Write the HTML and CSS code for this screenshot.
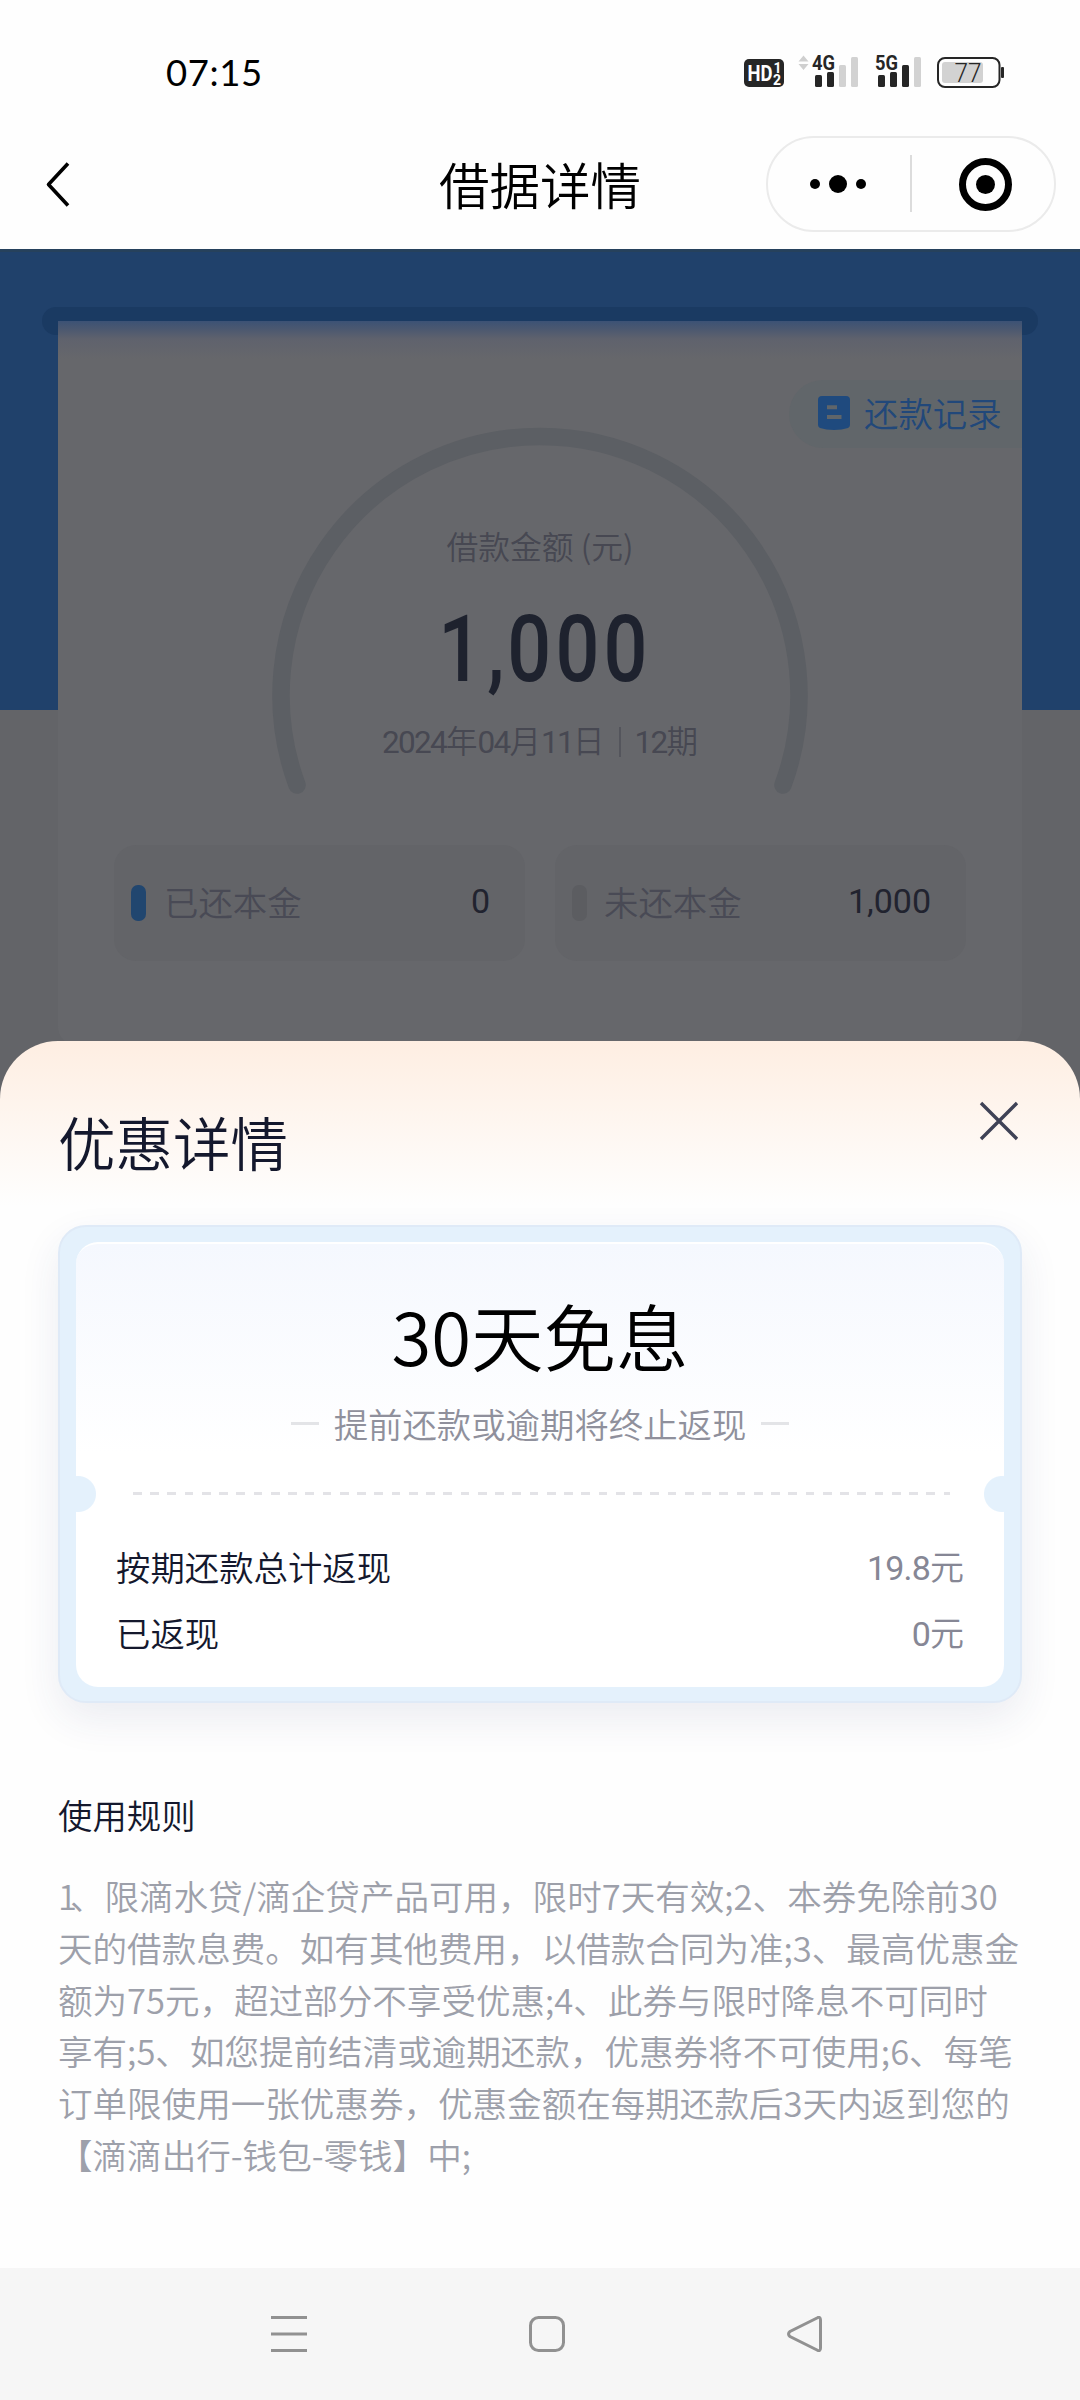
FILE: index.html
```html
<!DOCTYPE html>
<html lang="zh-CN">
<head>
<meta charset="utf-8">
<title>借据详情</title>
<link rel="stylesheet" href="styles.css">
</head>
<body>
<div class="phone">
  <header class="top">
    <div class="status">
      <span class="clock">07:15</span>
      <svg class="status-icons" width="264" height="40" viewBox="742 52 264 40">
        <rect x="744" y="59" width="40" height="28" rx="5" fill="#262626"/>
        <g font-family="Roboto, sans-serif" font-weight="700" fill="#fff">
          <text x="747.5" y="81" font-size="22" textLength="25" lengthAdjust="spacingAndGlyphs">HD</text>
          <text x="773.500" y="73" font-size="14">1</text>
          <text x="773" y="84.500" font-size="14">2</text>
        </g>
        <path d="M803.500 55.500l5 6h-10zM803.500 70l5-6h-10z" fill="#cfcfcf"/>
        <g font-family="Roboto, sans-serif" font-weight="700" font-size="21" fill="#262626">
          <text x="812" y="70" textLength="23" lengthAdjust="spacingAndGlyphs">4G</text>
          <text x="875" y="70" textLength="23" lengthAdjust="spacingAndGlyphs">5G</text>
        </g>
        <g fill="#262626">
          <rect x="815" y="75" width="7" height="12" rx="1.500"/>
          <rect x="827" y="72" width="7" height="15" rx="1.500"/>
          <rect x="878" y="75" width="7" height="12" rx="1.500"/>
          <rect x="890" y="72" width="7" height="15" rx="1.500"/>
          <rect x="902" y="65" width="7" height="22" rx="1.500"/>
        </g>
        <g fill="#d2d2d2">
          <rect x="839" y="65" width="7" height="22" rx="1.500"/>
          <rect x="851" y="57" width="7" height="30" rx="1.500"/>
          <rect x="914" y="57" width="7" height="30" rx="1.500"/>
          <rect x="942" y="62" width="41" height="21" rx="3"/>
        </g>
        <rect x="938" y="58" width="61.500" height="29" rx="7" fill="none" stroke="#262626" stroke-width="2"/>
        <rect x="1001" y="67" width="3" height="11" rx="1" fill="#262626"/>
        <text x="954.500" y="81.500" font-family="Roboto, sans-serif" font-size="25" fill="#262626" textLength="27" lengthAdjust="spacingAndGlyphs">77</text>
      </svg>
    </div>
    <div class="titlebar">
      <svg class="back" width="24" height="46" viewBox="46 161 24 46"><path d="M68 163.500L48.500 184.500L68 205.500" fill="none" stroke="#000" stroke-width="3.600" stroke-linejoin="round"/></svg>
      <h1>借据详情</h1>
      <div class="capsule">
        <svg width="286" height="92" viewBox="768 138 286 92">
          <circle cx="815" cy="184" r="5"/><circle cx="838" cy="184" r="9"/><circle cx="861" cy="184" r="5"/>
          <path d="M911 155V212" stroke="#dcdcdc" stroke-width="2"/>
          <circle cx="985.500" cy="184.500" r="23" fill="none" stroke="#000" stroke-width="7"/>
          <circle cx="985.500" cy="184.500" r="9.500"/>
        </svg>
      </div>
    </div>
  </header>

  <main class="stage">
    <section class="loan">
      <div class="slot"></div>
      <div class="loan-card">
        <div class="record">
          <svg width="32" height="34" viewBox="0 0 32 34"><path d="M4 0h24a4 4 0 0 1 4 4v25q0 2-2 3-6 2-14 2t-14-2q-2-1-2-3V4a4 4 0 0 1 4-4z" fill="#1f4a7e"/><path d="M9 11.200h10M9 21h14.500" stroke="#5f656a" stroke-width="4"/></svg>
          <span>还款记录</span>
        </div>
        <div class="gauge">
          <svg class="arc" width="540" height="370" viewBox="270 426 540 370"><path d="M297 785A259 259 0 1 1 783 785" fill="none" stroke="#5c5f64" stroke-width="17.500" stroke-linecap="round"/></svg>
          <div class="gauge-text">
            <p class="caption">借款金额 (元)</p>
            <p class="amount"><span>1</span><span class="comma">,</span><span>000</span></p>
            <p class="term"><span class="n">2024</span>年<span class="n">04</span>月<span class="n">11</span>日<i></i><span class="n">12</span>期</p>
          </div>
        </div>
        <div class="stats">
          <div class="stat"><i class="bar paid"></i><span>已还本金</span><b>0</b></div>
          <div class="stat"><i class="bar"></i><span>未还本金</span><b>1,000</b></div>
        </div>
      </div>
    </section>

    <section class="sheet">
      <div class="sheet-head">
        <h2>优惠详情</h2>
        <svg class="close" width="40" height="40" viewBox="0 0 40 40"><path d="M2 2L38 38M38 2L2 38" stroke="#3f4256" stroke-width="3.400"/></svg>
      </div>
      <div class="coupon">
        <div class="ticket">
          <h3>30天免息</h3>
          <p class="note">提前还款或逾期将终止返现</p>
          <div class="tear"></div>
          <dl>
            <div><dt>按期还款总计返现</dt><dd><span class="n">19.8</span>元</dd></div>
            <div><dt>已返现</dt><dd><span class="n">0</span>元</dd></div>
          </dl>
        </div>
      </div>
      <h4>使用规则</h4>
      <p class="rules"><span class="lead">1</span>、限滴水贷/滴企贷产品可用，限时7天有效;2、本券免除前30<br>天的借款息费。如有其他费用，以借款合同为准;3、最高优惠金<br>额为75元，超过部分不享受优惠;4、此券与限时降息不可同时<br>享有;5、如您提前结清或逾期还款，优惠券将不可使用;6、每笔<br>订单限使用一张优惠券，优惠金额在每期还款后3天内返到您的<br>【滴滴出行-钱包-零钱】中;</p>
    </section>
  </main>

  <nav class="navbar">
    <svg width="36" height="36" viewBox="0 0 36 36"><path d="M0 1.500H36M0 18H36M0 34.500H36"/></svg>
    <svg width="36" height="36" viewBox="0 0 36 36"><rect x="1.500" y="1.500" width="33" height="33" rx="8"/></svg>
    <svg width="36" height="36" viewBox="0 0 36 36"><path d="M30 2Q33.500 0 33.500 4V32Q33.500 36 30 34L3 20.500Q0 18 3 15.500Z"/></svg>
  </nav>
</div>
</body>
</html>
```
FILE: styles.css
```css
* { box-sizing: border-box; margin: 0; padding: 0; }
body {
  width: 1080px;
  background: #fff;
  font-family: "Noto Sans CJK SC", sans-serif;
  font-weight: 350;
  font-size: 34.4px;
}
svg { display: block; flex: none; }
i { font-style: normal; }
.phone { display: grid; grid-template-rows: 249px 2019px 132px; height: 2400px; overflow: hidden; }

/* status and title bars */
.top { background: #fefefe; }
.status { height: 136px; display: flex; align-items: flex-start; justify-content: space-between; padding: 52px 74px 0 166px; }
.clock { margin-top: -1px; font-family: Lato, sans-serif; font-weight: 400; font-size: 36.500px; letter-spacing: .6px; line-height: 42px; color: #000; }
.titlebar { height: 96px; display: grid; grid-template-columns: 290px 1fr 290px; align-items: center; padding: 0 24px; }
.back { margin-left: 22px; }
.titlebar h1 { font-size: 50.500px; font-weight: 350; line-height: 95px; height: 96px; text-align: center; color: #000; }
.capsule { height: 96px; border: 2px solid #ebebeb; border-radius: 48px; }

/* dimmed loan summary */
.stage { position: relative; background: #636468; }
.loan { height: 461px; padding: 58px 42px 0; background: #20416b; border-top: 3px solid #26415c; }
.slot { height: 28px; margin-top: -3px; border-radius: 14px; background: #1a3a62; }
.loan-card {
  height: 725px;
  margin: -14px 16px 0;
  position: relative;
  border-radius: 0 0 20px 20px;
  background: linear-gradient(#3c5275 0, #4b5870 8px, #5f626d 18px, #66676b 38px);
  padding-top: 59px;
}
.record {
  width: 233px; height: 68px; margin-left: auto; padding-left: 29px;
  display: flex; align-items: center; gap: 14px;
  border-radius: 34px 0 0 34px;
  background: #61666a; color: #21487a;
}
.record svg { margin-top: -2px; }
.record span { margin-top: -5px; }
.gauge { position: relative; height: 370px; margin: -22px 212px 0; }
.arc { position: absolute; inset: 0; }
.gauge-text { position: relative; padding-top: 96px; text-align: center; color: #474852; }
.caption { font-size: 31.800px; line-height: 46px; }
.amount {
  display: flex; justify-content: center; margin: 28px 0 0 10px;
  font-family: Roboto, sans-serif; font-weight: 500; font-size: 92px; line-height: 108px;
  letter-spacing: 5px; color: #1e222e; transform: scaleX(.84);
}
.comma { width: 25px; padding-left: 1px; }
.term { margin-top: 12px; font-size: 31.500px; line-height: 46px; }
.n { font-family: Roboto, sans-serif; font-weight: 400; letter-spacing: -1.300px; }
.term .n { letter-spacing: -1.700px; }
.term i { display: inline-block; width: 2px; height: 30px; margin: 0 14px 0 14px; vertical-align: -4px; background: #54555c; }
.stats { display: grid; grid-template-columns: 1fr 1fr; gap: 30px; margin-top: 49px; padding: 0 56px; }
.stat { height: 116px; display: flex; align-items: center; padding: 0 35px 0 17px; border-radius: 22px; background: #636468; color: #494a55; }
.stat span { margin: -4px 0 0 17px; flex: 1; }
.stat b { margin-top: -4px; font: 400 34px/1 Roboto, sans-serif; color: #21232f; }
.bar { width: 15px; height: 36px; border-radius: 7px; background: #5c5d61; }
.bar.paid { background: #21466f; }
.paid + span { margin-left: 18px; }

/* discount sheet */
.sheet {
  position: absolute; left: 0; right: 0; bottom: 0; height: 1227px;
  padding: 0 58px; border-radius: 58px 58px 0 0;
  background: linear-gradient(#feeee2, #fefefe 165px);
  color: #14182d;
}
.sheet-head { height: 184px; display: flex; justify-content: space-between; padding: 60px 3px 0 0; }
.sheet h2 { margin-top: -2px; font-size: 57.500px; font-weight: 350; line-height: 84px; }
.coupon {
  height: 478px; padding: 15px 16px; border: 2px solid #dfeaf7; border-radius: 28px;
  background: #e4f1fc; box-shadow: 0 16px 40px rgba(40, 60, 110, .09);
}
.ticket {
  height: 445px; border-radius: 22px; padding: 39px 40px 0; border-top: 2px solid #fff;
  background:
    radial-gradient(circle at 2px 250px, #e4f1fc 17.500px, transparent 18.500px),
    radial-gradient(circle at 926px 250px, #e4f1fc 17.500px, transparent 18.500px),
    linear-gradient(#f5f8fe, #fff 210px);
}
.ticket h3 { font-size: 72.500px; font-weight: 350; line-height: 104px; text-align: center; color: #000; }
.note { display: flex; justify-content: center; align-items: center; gap: 15px; margin-top: 11px; line-height: 50px; color: #8f909c; }
.note::before, .note::after { content: ""; width: 28px; height: 3px; background: #e3e4e7; }
.tear { height: 3px; margin: 44px 14px 0 17px; background: repeating-linear-gradient(90deg, #e3e3e7 0 8.600px, transparent 8.600px 17.250px); }
dl { margin-top: 46px; }
dl div { display: flex; justify-content: space-between; line-height: 50px; height: 50px; margin-bottom: 16px; }
dd { color: #868795; font-size: 34px; }
dd .n { letter-spacing: -.8px; }
.sheet h4 { margin-top: 86px; font-size: 34.400px; font-weight: 350; line-height: 50px; }
.rules { margin-top: 31px; font-size: 34.560px; line-height: 51.800px; white-space: nowrap; color: #9da0aa; }
.lead { letter-spacing: -7px; }

/* system navigation */
.navbar { display: flex; background: #f6f6f6; padding: 48px 257px 0 271px; justify-content: space-between; }
.navbar svg { fill: none; stroke: #919191; stroke-width: 3; }
```
